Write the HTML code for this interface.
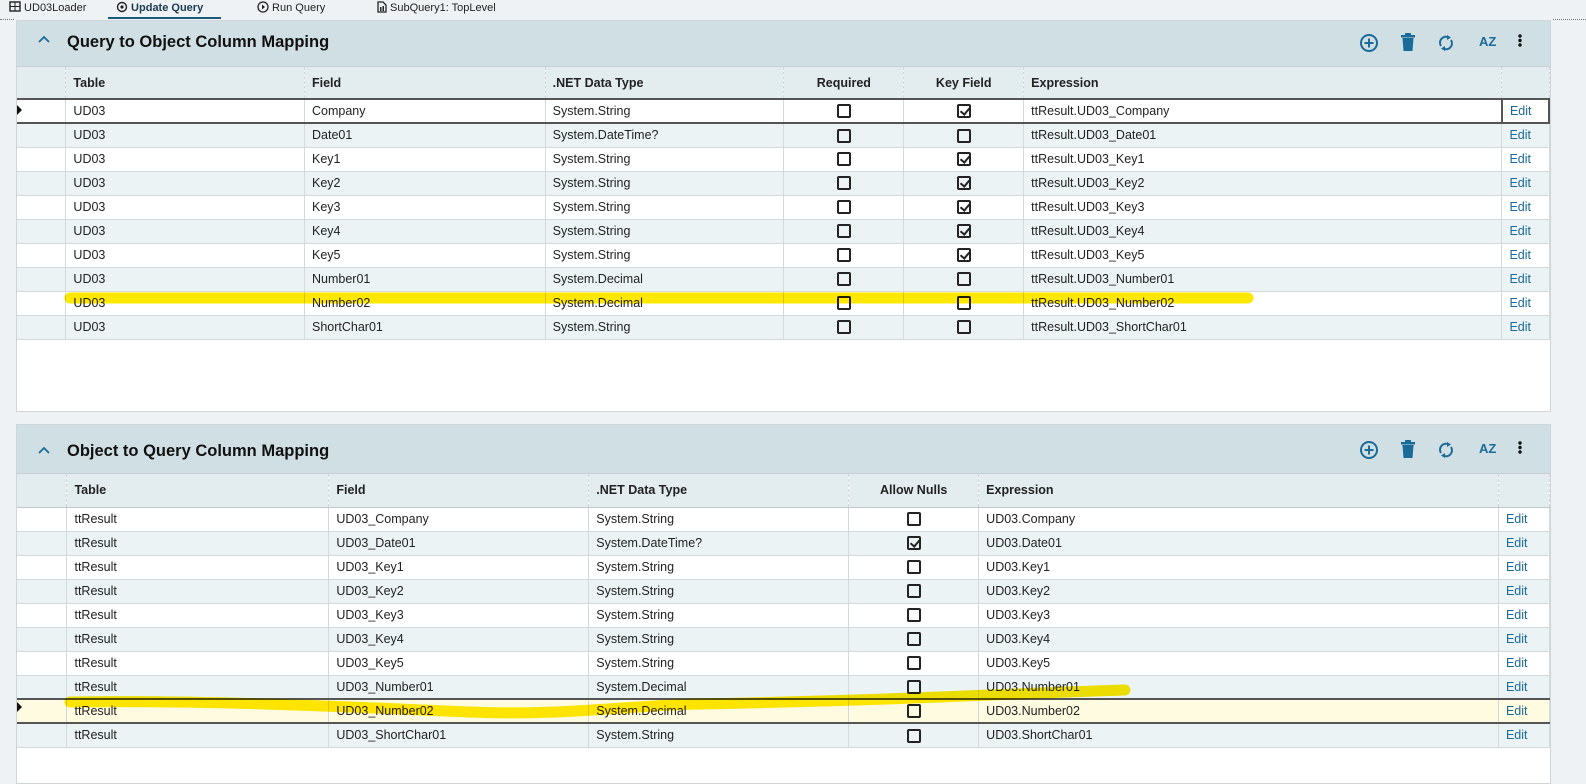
<!DOCTYPE html>
<html><head><meta charset="utf-8"><style>
*{box-sizing:border-box;margin:0;padding:0}
body{width:1586px;height:769px;overflow:hidden;background:#eef2f5;font-family:"Liberation Sans",sans-serif;font-size:12.5px;color:#222;position:relative}
.tabs{position:absolute;left:0;top:0;height:19px;width:1586px;font-size:11px}
.tab{position:absolute;top:1px;white-space:nowrap}
.tabline{position:absolute;left:108px;top:17px;width:113px;height:2px;background:#1b5a78}
.panel{position:absolute;left:16px;width:1535px;background:#fff;border:1px solid #cfd6da}
.hdr{height:46px;background:#d0dfe3;position:relative;border-bottom:1px solid #c6d0d4}
.hdr .t{position:absolute;left:50px;top:12px;font-size:16.5px;font-weight:bold;color:#111}
.hdr .car{position:absolute;left:20px;top:13px}
.ico{position:absolute;top:12px}
table{border-collapse:collapse;table-layout:fixed}
td,th{height:24px;padding:0 7px;white-space:nowrap;overflow:hidden;border-right:1px solid #d4d9dc;border-bottom:1px solid #d4d9dc;text-align:left;font-weight:normal}
th{height:32px;background:#e3ecee;font-weight:bold;border-right:1px dashed #d0d6d9;border-bottom:1px solid #c0c8cc}
tr:nth-child(odd) td{background:#ecf3f5}
td.c,th.c{text-align:center}
td.e{color:#1a6a9a}
.cb{display:inline-block;width:14px;height:14px;border:2px solid #222;border-radius:2px;vertical-align:middle;position:relative}
.cb.k::after{content:"";position:absolute;left:3px;top:0px;width:4px;height:7px;border-right:2px solid #222;border-bottom:2px solid #222;transform:rotate(40deg)}
tr.sel td{border-top:2px solid #555;border-bottom:2px solid #555}
.arrow{position:absolute;width:0;height:0;border-top:5px solid transparent;border-bottom:5px solid transparent;border-left:5px solid #111}
</style></head><body>
<div class="tabs">
<span class="tab" style="left:9px"><svg width="12" height="11" style="vertical-align:-1px"><rect x="1" y="1" width="10" height="9" fill="none" stroke="#222" stroke-width="1.4"/><line x1="1" y1="5.5" x2="11" y2="5.5" stroke="#222"/><line x1="6" y1="1" x2="6" y2="10" stroke="#222"/></svg> UD03Loader</span>
<span class="tab" style="left:116px;font-weight:bold;color:#1b3b50"><svg width="12" height="12" style="vertical-align:-2px"><circle cx="6" cy="6" r="4.5" fill="none" stroke="#222" stroke-width="1.4"/><circle cx="6" cy="6" r="1.6" fill="#222"/></svg> Update Query</span>
<span class="tab" style="left:257px"><svg width="12" height="12" style="vertical-align:-2px"><circle cx="6" cy="6" r="5" fill="none" stroke="#222" stroke-width="1.3"/><path d="M5 3.5L8 6L5 8.5Z" fill="#222"/></svg> Run Query</span>
<span class="tab" style="left:377px"><svg width="10" height="12" style="vertical-align:-2px"><path d="M1 1H6L9 4V11H1Z" fill="none" stroke="#222" stroke-width="1.3"/><rect x="3" y="6" width="1.5" height="4" fill="#222"/><rect x="5.5" y="5" width="1.5" height="5" fill="#222"/></svg> SubQuery1: TopLevel</span>
<div class="tabline"></div>
</div>
<div style="position:absolute;left:1553px;top:19px;width:33px;border-top:1px dotted #777"></div>
<div style="position:absolute;left:0;top:19px;width:14px;border-top:1px dotted #777"></div>

<!-- Panel 1 -->
<div class="panel" style="top:20px;height:392px">
<div class="hdr"><svg class="car" width="14" height="10"><path d="M2 8L7 3L12 8" fill="none" stroke="#1a6a9a" stroke-width="1.8"/></svg><span class="t">Query to Object Column Mapping</span>
<svg class="ico" style="left:1342px" width="20" height="20"><circle cx="10" cy="10" r="8" fill="none" stroke="#1a6a9a" stroke-width="2"/><path d="M10 5.5V14.5M5.5 10H14.5" stroke="#1a6a9a" stroke-width="2"/></svg>
<svg class="ico" style="left:1383px" width="16" height="20"><rect x="1" y="2" width="14" height="2.5" fill="#1a6a9a"/><rect x="5" y="0" width="6" height="3" fill="#1a6a9a"/><path d="M2.5 5H13.5L12.5 18H3.5Z" fill="#1a6a9a"/></svg>
<svg class="ico" style="left:1420px" width="18" height="20"><path d="M4 13A6 6 0 0 1 12 4.5M14 7A6 6 0 0 1 6 15.5" fill="none" stroke="#1a6a9a" stroke-width="2"/><path d="M10 2L14 4.5L10 7Z M8 13L4 15.5L8 18Z" fill="#1a6a9a"/></svg>
<span class="ico" style="left:1462px;top:13px;font-weight:bold;color:#1a6a9a;font-size:13px">AZ</span>
<svg class="ico" style="left:1500px" width="6" height="16"><circle cx="3" cy="3" r="1.7" fill="#111"/><circle cx="3" cy="7.5" r="1.7" fill="#111"/><circle cx="3" cy="12" r="1.7" fill="#111"/></svg>
</div>
<table>
<colgroup><col style="width:49px"><col style="width:239px"><col style="width:241px"><col style="width:239px"><col style="width:120px"><col style="width:120px"><col style="width:479px"><col style="width:47px"></colgroup>
<tr><th></th><th>Table</th><th>Field</th><th>.NET Data Type</th><th class="c">Required</th><th class="c">Key Field</th><th>Expression</th><th></th></tr>
<tr class="sel"><td></td><td>UD03</td><td>Company</td><td>System.String</td><td class="c"><span class="cb"></span></td><td class="c"><span class="cb k"></span></td><td>ttResult.UD03_Company</td><td class="e" style="border:2px solid #555">Edit</td></tr>
<tr><td></td><td>UD03</td><td>Date01</td><td>System.DateTime?</td><td class="c"><span class="cb"></span></td><td class="c"><span class="cb"></span></td><td>ttResult.UD03_Date01</td><td class="e">Edit</td></tr>
<tr><td></td><td>UD03</td><td>Key1</td><td>System.String</td><td class="c"><span class="cb"></span></td><td class="c"><span class="cb k"></span></td><td>ttResult.UD03_Key1</td><td class="e">Edit</td></tr>
<tr><td></td><td>UD03</td><td>Key2</td><td>System.String</td><td class="c"><span class="cb"></span></td><td class="c"><span class="cb k"></span></td><td>ttResult.UD03_Key2</td><td class="e">Edit</td></tr>
<tr><td></td><td>UD03</td><td>Key3</td><td>System.String</td><td class="c"><span class="cb"></span></td><td class="c"><span class="cb k"></span></td><td>ttResult.UD03_Key3</td><td class="e">Edit</td></tr>
<tr><td></td><td>UD03</td><td>Key4</td><td>System.String</td><td class="c"><span class="cb"></span></td><td class="c"><span class="cb k"></span></td><td>ttResult.UD03_Key4</td><td class="e">Edit</td></tr>
<tr><td></td><td>UD03</td><td>Key5</td><td>System.String</td><td class="c"><span class="cb"></span></td><td class="c"><span class="cb k"></span></td><td>ttResult.UD03_Key5</td><td class="e">Edit</td></tr>
<tr><td></td><td>UD03</td><td>Number01</td><td>System.Decimal</td><td class="c"><span class="cb"></span></td><td class="c"><span class="cb"></span></td><td>ttResult.UD03_Number01</td><td class="e">Edit</td></tr>
<tr><td></td><td>UD03</td><td>Number02</td><td>System.Decimal</td><td class="c"><span class="cb"></span></td><td class="c"><span class="cb"></span></td><td>ttResult.UD03_Number02</td><td class="e">Edit</td></tr>
<tr><td></td><td>UD03</td><td>ShortChar01</td><td>System.String</td><td class="c"><span class="cb"></span></td><td class="c"><span class="cb"></span></td><td>ttResult.UD03_ShortChar01</td><td class="e">Edit</td></tr>
</table>
</div>
<div class="arrow" style="left:17px;top:105px"></div>

<!-- Panel 2 -->
<div class="panel" style="top:424px;height:360px">
<div class="hdr" style="height:49px"><svg class="car" width="14" height="10" style="top:20px"><path d="M2 8L7 3L12 8" fill="none" stroke="#1a6a9a" stroke-width="1.8"/></svg><span class="t" style="top:17px">Object to Query Column Mapping</span>
<svg class="ico" style="left:1342px;top:15px" width="20" height="20"><circle cx="10" cy="10" r="8" fill="none" stroke="#1a6a9a" stroke-width="2"/><path d="M10 5.5V14.5M5.5 10H14.5" stroke="#1a6a9a" stroke-width="2"/></svg>
<svg class="ico" style="left:1383px;top:15px" width="16" height="20"><rect x="1" y="2" width="14" height="2.5" fill="#1a6a9a"/><rect x="5" y="0" width="6" height="3" fill="#1a6a9a"/><path d="M2.5 5H13.5L12.5 18H3.5Z" fill="#1a6a9a"/></svg>
<svg class="ico" style="left:1420px;top:15px" width="18" height="20"><path d="M4 13A6 6 0 0 1 12 4.5M14 7A6 6 0 0 1 6 15.5" fill="none" stroke="#1a6a9a" stroke-width="2"/><path d="M10 2L14 4.5L10 7Z M8 13L4 15.5L8 18Z" fill="#1a6a9a"/></svg>
<span class="ico" style="left:1462px;top:16px;font-weight:bold;color:#1a6a9a;font-size:13px">AZ</span>
<svg class="ico" style="left:1500px;top:15px" width="6" height="16"><circle cx="3" cy="3" r="1.7" fill="#111"/><circle cx="3" cy="7.5" r="1.7" fill="#111"/><circle cx="3" cy="12" r="1.7" fill="#111"/></svg>
</div>
<table>
<colgroup><col style="width:50px"><col style="width:262px"><col style="width:260px"><col style="width:260px"><col style="width:130px"><col style="width:520px"><col style="width:51px"></colgroup>
<tr><th style="height:33px"></th><th>Table</th><th>Field</th><th>.NET Data Type</th><th class="c">Allow Nulls</th><th>Expression</th><th></th></tr>
<tr><td></td><td>ttResult</td><td>UD03_Company</td><td>System.String</td><td class="c"><span class="cb"></span></td><td>UD03.Company</td><td class="e">Edit</td></tr>
<tr><td></td><td>ttResult</td><td>UD03_Date01</td><td>System.DateTime?</td><td class="c"><span class="cb k"></span></td><td>UD03.Date01</td><td class="e">Edit</td></tr>
<tr><td></td><td>ttResult</td><td>UD03_Key1</td><td>System.String</td><td class="c"><span class="cb"></span></td><td>UD03.Key1</td><td class="e">Edit</td></tr>
<tr><td></td><td>ttResult</td><td>UD03_Key2</td><td>System.String</td><td class="c"><span class="cb"></span></td><td>UD03.Key2</td><td class="e">Edit</td></tr>
<tr><td></td><td>ttResult</td><td>UD03_Key3</td><td>System.String</td><td class="c"><span class="cb"></span></td><td>UD03.Key3</td><td class="e">Edit</td></tr>
<tr><td></td><td>ttResult</td><td>UD03_Key4</td><td>System.String</td><td class="c"><span class="cb"></span></td><td>UD03.Key4</td><td class="e">Edit</td></tr>
<tr><td></td><td>ttResult</td><td>UD03_Key5</td><td>System.String</td><td class="c"><span class="cb"></span></td><td>UD03.Key5</td><td class="e">Edit</td></tr>
<tr><td></td><td>ttResult</td><td>UD03_Number01</td><td>System.Decimal</td><td class="c"><span class="cb"></span></td><td>UD03.Number01</td><td class="e">Edit</td></tr>
<tr class="sel"><td style="background:#fffbe0"></td><td style="background:#fffbe0">ttResult</td><td style="background:#fffbe0">UD03_Number02</td><td style="background:#fffbe0">System.Decimal</td><td class="c" style="background:#fffbe0"><span class="cb"></span></td><td style="background:#fffbe0">UD03.Number02</td><td class="e" style="background:#fffbe0">Edit</td></tr>
<tr><td></td><td>ttResult</td><td>UD03_ShortChar01</td><td>System.String</td><td class="c"><span class="cb"></span></td><td>UD03.ShortChar01</td><td class="e">Edit</td></tr>
</table>
</div>
<div class="arrow" style="left:17px;top:702px"></div>

<svg width="1586" height="769" style="position:absolute;left:0;top:0;mix-blend-mode:multiply;pointer-events:none">
<path d="M70 298C300 296 600 300 1248 298" stroke="#ffe800" stroke-width="11" fill="none" stroke-linecap="round"/>
<path d="M70 702C200 700 330 706 470 712C560 716 620 706 700 704C900 700 1000 694 1125 690" stroke="#ffe800" stroke-width="11" fill="none" stroke-linecap="round"/>
</svg>
</body></html>
